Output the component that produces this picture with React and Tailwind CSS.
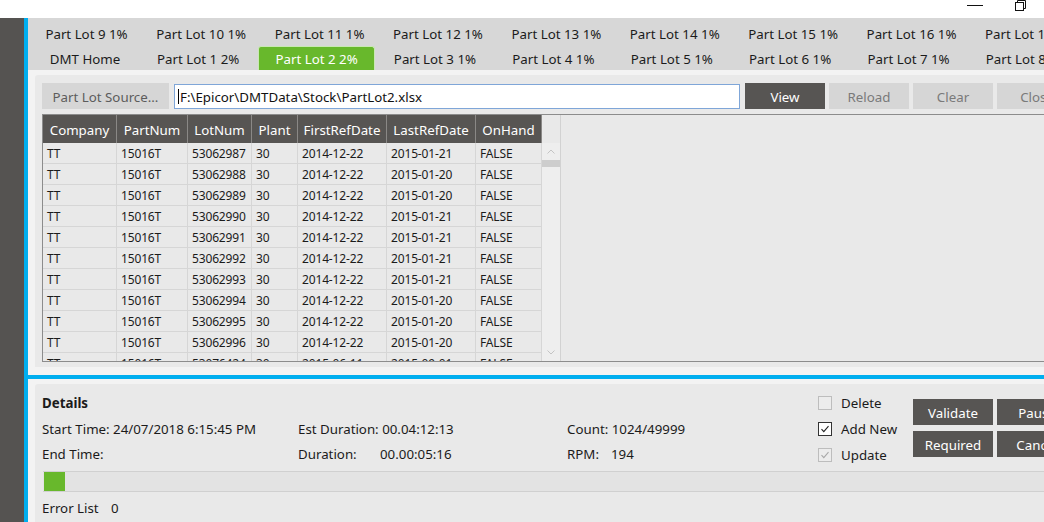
import React from "react";

const row1 = ["Part Lot 9 1%", "Part Lot 10 1%", "Part Lot 11 1%", "Part Lot 12 1%", "Part Lot 13 1%", "Part Lot 14 1%", "Part Lot 15 1%", "Part Lot 16 1%", "Part Lot 17 1%"];
const row2 = ["DMT Home", "Part Lot 1 2%", "Part Lot 2 2%", "Part Lot 3 1%", "Part Lot 4 1%", "Part Lot 5 1%", "Part Lot 6 1%", "Part Lot 7 1%", "Part Lot 8 1%"];

const cols = [
  { name: "Company", w: 74 },
  { name: "PartNum", w: 71 },
  { name: "LotNum", w: 64 },
  { name: "Plant", w: 46 },
  { name: "FirstRefDate", w: 89 },
  { name: "LastRefDate", w: 89 },
  { name: "OnHand", w: 66 },
];

const rows = [
  ["53062987", "2014-12-22", "2015-01-21"],
  ["53062988", "2014-12-22", "2015-01-20"],
  ["53062989", "2014-12-22", "2015-01-20"],
  ["53062990", "2014-12-22", "2015-01-21"],
  ["53062991", "2014-12-22", "2015-01-21"],
  ["53062992", "2014-12-22", "2015-01-21"],
  ["53062993", "2014-12-22", "2015-01-21"],
  ["53062994", "2014-12-22", "2015-01-20"],
  ["53062995", "2014-12-22", "2015-01-20"],
  ["53062996", "2014-12-22", "2015-01-20"],
  ["53076424", "2015-06-11", "2015-09-01"],
];

function Tab({ label, w, selected, second }) {
  if (selected) {
    return (
      <div style={{ width: w }} className="h-[24px] shrink-0 px-[1px]">
        <div className="h-full bg-[#68b82c] border border-b-0 border-[#c9e8b4] rounded-t-[3px] flex items-center justify-center pt-[2px] text-white whitespace-nowrap">
          {label}
        </div>
      </div>
    );
  }
  return (
    <div style={{ width: w }} className={`h-[24px] shrink-0 flex items-center justify-center whitespace-nowrap text-[#1b1b1b] ${second ? "pt-[4px]" : "pt-[2px]"}`}>
      {label}
    </div>
  );
}

function CheckBox({ checked, dark, label }) {
  return (
    <div className="h-[26px] flex items-center gap-[9px]">
      <div className={`w-[14px] h-[14px] border flex items-center justify-center ${dark ? "border-[#333333] bg-white" : "border-[#bdbdbd] bg-[#ececec]"}`}>
        {checked && (
          <svg width="12" height="12" viewBox="0 0 12 12">
            <path d="M2.5 6.2 L4.8 8.6 L9.5 3.2" fill="none" stroke={dark ? "#222" : "#a8a8a8"} strokeWidth="1.1" />
          </svg>
        )}
      </div>
      <span className="text-[#1b1b1b] pt-[1px]">{label}</span>
    </div>
  );
}

function Btn({ children, dark, className = "" }) {
  return (
    <div className={`h-[26px] flex items-center justify-center pt-[3px] ${dark ? "bg-[#575553] text-white" : "bg-[#d6d6d6] text-[#7a7a7a]"} ${className}`}>
      {children}
    </div>
  );
}

export default function App() {
  return (
    <div className="w-[1044px] h-[522px] overflow-hidden bg-white flex flex-col font-['Noto_Sans',sans-serif] text-[13.3px] leading-none">
      {/* title bar */}
      <div className="h-[18px] shrink-0 bg-white flex justify-end items-start">
        <svg width="80" height="18" viewBox="0 0 80 18">
          <line x1="3" y1="5.5" x2="19" y2="5.5" stroke="#111" strokeWidth="1" />
          <rect x="51.5" y="2.5" width="8" height="8" fill="white" stroke="#111" strokeWidth="1" />
          <path d="M53.5 2.5 V0.5 H61.5 V8.5 H59.5" fill="none" stroke="#111" strokeWidth="1" />
        </svg>
      </div>
      <div className="flex-1 flex min-h-0">
        <div className="w-[24px] shrink-0 bg-[#555351]" />
        <div className="w-[4px] shrink-0 bg-[#00aeef]" />
        <div className="w-[1100px] shrink-0 flex flex-col bg-[#f3f3f3]">
          {/* tab strip */}
          <div className="h-[52px] shrink-0 bg-[#d7d7d7] pt-[4px] pl-[3px] flex flex-col">
            <div className="flex">
              {row1.map((t, i) => (
                <Tab key={t} label={t} w={i === 0 ? 111 : 118.4} />
              ))}
            </div>
            <div className="flex">
              {row2.map((t, i) => (
                <Tab key={t} label={t} w={i === 0 ? 108 : 118.4} selected={i === 2} second />
              ))}
            </div>
          </div>
          <div className="h-[5px] shrink-0" />
          {/* top panel */}
          <div className="ml-[7px] h-[292px] shrink-0 bg-[#e9e9e9] rounded-tl-[3px] pl-[7px] pt-[8px] flex flex-col">
            <div className="flex items-center h-[26px]">
              <Btn className="w-[127px] !text-[#5c5c5c]">Part Lot Source...</Btn>
              <div className="ml-[5px] w-[566px] h-[25px] bg-white border border-[#7fa6d8] flex items-center pl-[3px] pt-[3px] text-[#111]">
                <span className="w-px h-[15px] bg-black mr-[1px] -mt-[2px]" />F:\Epicor\DMTData\Stock\PartLot2.xlsx
              </div>
              <Btn dark className="ml-[5px] w-[80px]">View</Btn>
              <Btn className="ml-[4px] w-[80px]">Reload</Btn>
              <Btn className="ml-[4px] w-[80px]">Clear</Btn>
              <Btn className="ml-[4px] w-[80px]">Close</Btn>
            </div>
            {/* grid */}
            <div className="mt-[5px] h-[248px] border border-[#8c8c8c] flex overflow-hidden">
              <div className="w-[499px] shrink-0 flex flex-col overflow-hidden">
                <div className="h-[28px] shrink-0 flex bg-[#575553] text-white">
                  {cols.map((c) => (
                    <div key={c.name} style={{ width: c.w }} className="h-full flex items-center justify-center pt-[3px] border-r border-[#8a8886] shrink-0">
                      {c.name}
                    </div>
                  ))}
                </div>
                {rows.map((r, i) => {
                  const vals = ["TT", "15016T", r[0], "30", r[1], r[2], "FALSE"];
                  return (
                    <div key={i} className="h-[21px] shrink-0 flex border-b border-[#d6d6d6] text-[12px] text-[#1b1b1b] tracking-[-0.15px]">
                      {vals.map((v, j) => (
                        <div key={j} style={{ width: cols[j].w }} className="h-full shrink-0 flex items-center pl-[4px] pt-[2px] border-r border-[#d6d6d6]">
                          {v}
                        </div>
                      ))}
                    </div>
                  );
                })}
              </div>
              <div className="w-[19px] shrink-0 flex flex-col border-r border-[#d2d2d2]">
                <div className="h-[28px] shrink-0" />
                <div className="flex-1 bg-[#eeeeee] flex flex-col">
                  <div className="h-[17px] flex items-center justify-center">
                    <svg width="8" height="5" viewBox="0 0 8 5"><path d="M0.5 4.5 L4 1 L7.5 4.5" fill="none" stroke="#c4c4c4" strokeWidth="1" /></svg>
                  </div>
                  <div className="h-[7px] bg-[#cdcdcd]" />
                  <div className="flex-1" />
                  <div className="h-[17px] flex items-center justify-center">
                    <svg width="8" height="5" viewBox="0 0 8 5"><path d="M0.5 0.5 L4 4 L7.5 0.5" fill="none" stroke="#c4c4c4" strokeWidth="1" /></svg>
                  </div>
                </div>
              </div>
              <div className="flex-1" />
            </div>
          </div>
          <div className="h-[8px] shrink-0" />
          <div className="h-[4px] shrink-0 bg-[#00aeef]" />
          <div className="h-[5px] shrink-0" />
          {/* bottom panel */}
          <div className="ml-[7px] flex-1 bg-[#e9e9e9] rounded-tl-[3px] pl-[7px] pt-[6px] flex flex-col text-[#1b1b1b]">
            <div className="flex items-start">
              <div className="w-[776px] shrink-0 flex flex-col">
                <div className="h-[26px] flex items-center pt-[2px] font-bold">Details</div>
                <div className="h-[26px] flex items-center pt-[1px]">
                  <div className="w-[256px] shrink-0">Start Time: 24/07/2018 6:15:45 PM</div>
                  <div className="w-[269px] shrink-0">Est Duration: 00.04:12:13</div>
                  <div>Count: 1024/49999</div>
                </div>
                <div className="h-[26px] flex items-center">
                  <div className="w-[256px] shrink-0">End Time:</div>
                  <div className="w-[269px] shrink-0 flex">
                    <span className="w-[82px] shrink-0">Duration:</span>
                    <span>00.00:05:16</span>
                  </div>
                  <div className="flex">
                    <span className="w-[44px] shrink-0">RPM:</span>
                    <span>194</span>
                  </div>
                </div>
              </div>
              <div className="w-[95px] shrink-0 flex flex-col">
                <CheckBox label="Delete" />
                <CheckBox label="Add New" checked dark />
                <CheckBox label="Update" checked />
              </div>
              <div className="mt-[9px] grid grid-cols-[80px_80px] content-start gap-x-[4px] gap-y-[6px]">
                <Btn dark>Validate</Btn>
                <Btn dark>Pause</Btn>
                <Btn dark>Required</Btn>
                <Btn dark>Cancel</Btn>
              </div>
            </div>
            <div className="mt-[3px] ml-[1px] h-[21px] border-y border-[#d0d0d0] bg-[#e3e3e3] flex items-stretch">
              <div className="w-[21px] ml-[1px] bg-[#68b82c]" />
            </div>
            <div className="mt-[6px] h-[20px] flex items-center pt-[2px]">
              <span className="w-[69px]">Error List</span>
              <span>0</span>
            </div>
          </div>
        </div>
      </div>
    </div>
  );
}
